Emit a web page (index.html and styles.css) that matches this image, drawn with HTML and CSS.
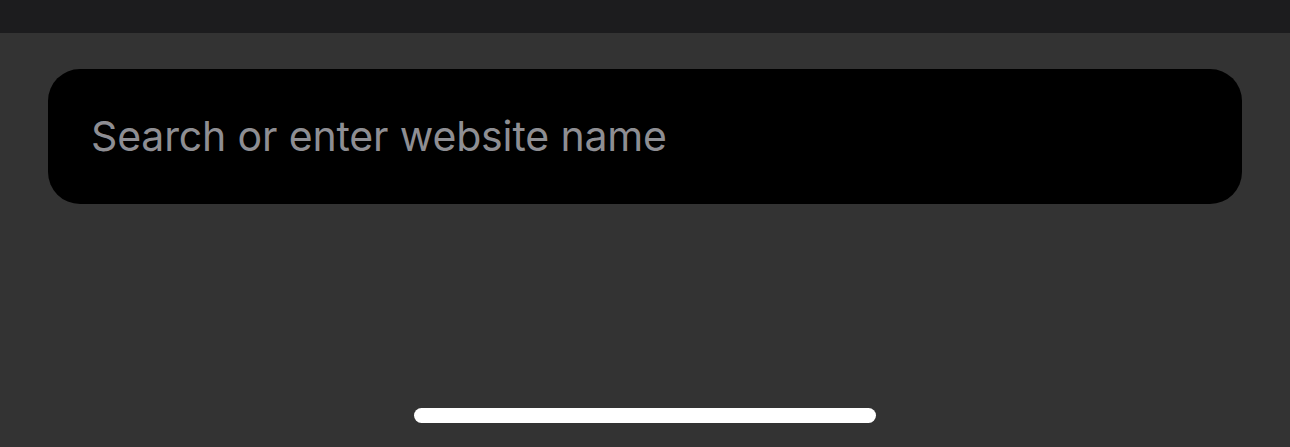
FILE: index.html
```html
<!DOCTYPE html>
<html lang="en">
<head>
<meta charset="utf-8">
<title>Search</title>
<link rel="stylesheet" href="styles.css">
</head>
<body>
<div class="screen">
  <div class="top-bar"></div>
  <div class="content">
    <div class="search-field">
      <span class="placeholder">Search or enter website name</span>
    </div>
  </div>
  <div class="home-area">
    <div class="home-indicator"></div>
  </div>
</div>
</body>
</html>
```
FILE: styles.css
```css
html, body {
  margin: 0;
  padding: 0;
  background: #333333;
}
.screen {
  width: 1290px;
  height: 447px;
  display: flex;
  flex-direction: column;
  overflow: hidden;
}
.top-bar {
  height: 33px;
  background: #1c1c1e;
  flex: none;
}
.content {
  padding: 36px 48px 0 48px;
}
.search-field {
  height: 135px;
  background: #000000;
  border-radius: 32px;
  display: flex;
  align-items: center;
  padding-left: 43px;
}
.placeholder {
  font-family: Inter, "Liberation Sans", sans-serif;
  font-size: 41px;
  color: #8e8e93;
  letter-spacing: -0.15px;
  line-height: 1;
}
.home-area {
  flex: 1;
  display: flex;
  justify-content: center;
  padding-top: 204px;
}
.home-indicator {
  width: 462px;
  height: 15px;
  border-radius: 8px;
  background: #ffffff;
}
```
